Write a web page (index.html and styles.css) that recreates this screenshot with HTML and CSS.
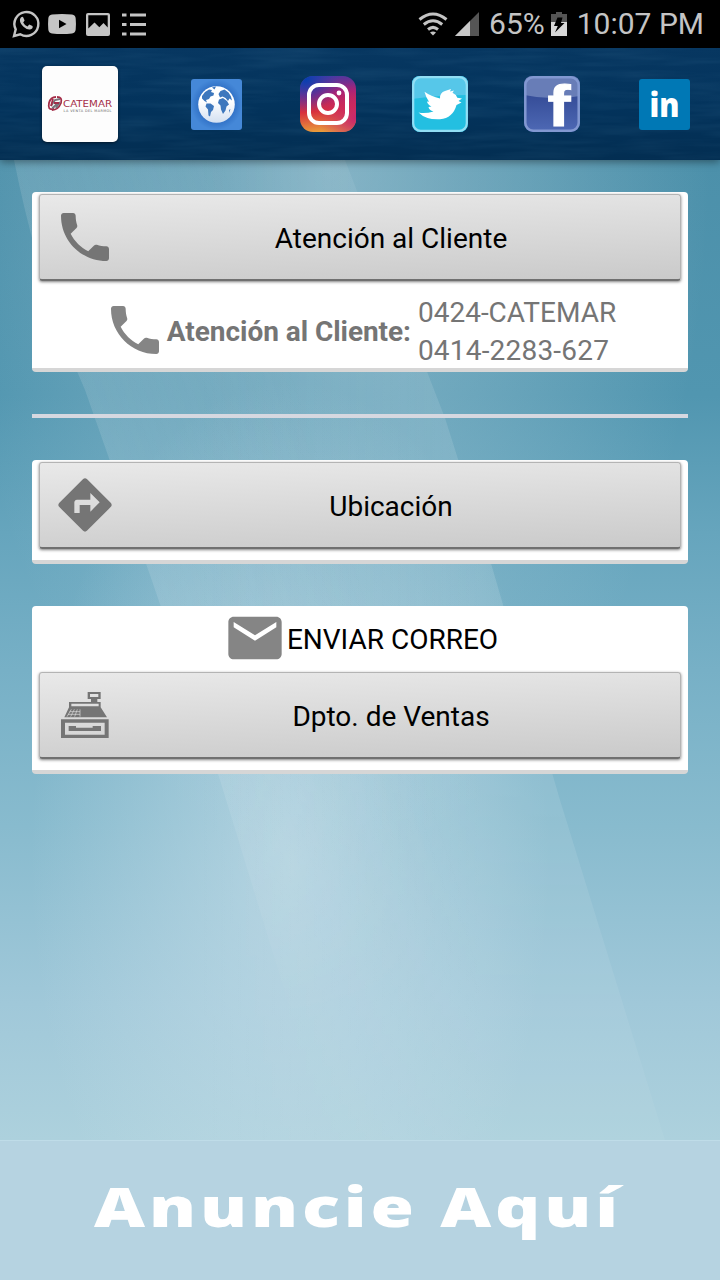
FILE: index.html
```
<!DOCTYPE html>
<html lang="es">
	<head>
		<meta charset="UTF-8"/>
		<meta name="viewport" content="width=720, initial-scale=1"/>
		<title>Catemar</title>
		<link rel="stylesheet" href="styles.css">
	</head>
	<body>
		<div class="status">
			<div class="status-left">
				<svg width="28" height="30" viewBox="0 0 28 30" fill="none" stroke="#c4c4c4">
					<path d="M2 27l1.700-6.600A12 12 0 1 1 8.300 25.300z" stroke-width="2.400"/>
					<path d="M9 8.500q1.500-1.300 2.300 0l1.300 3-1.400 1.900q1.400 2.900 4.300 4l1.700-2 3.300 1.600q.8 2.300-1.700 3.300-3.400 1-7.300-2.600C7.600 14 7.200 10.300 9 8.500z" fill="#c4c4c4" stroke="none"/>
				</svg>
				<svg width="28" height="20" viewBox="0 0 28 20">
					<path d="M4 .6Q14-.5 24 .6q3.500.4 3.700 4 .5 5.400 0 11-.3 3.400-3.700 3.800-10 1-20 0-3.400-.4-3.700-3.800-.5-5.600 0-11Q.5 1 4 .6z" fill="#c4c4c4"/>
					<path d="M11 5.800v8.400l7.500-4.200z" fill="#000"/>
				</svg>
				<svg width="24" height="23" viewBox="0 0 24 23">
					<rect width="24" height="23" rx="2" fill="#c4c4c4"/>
					<path d="M2.300 2.300h19.400v12.200L17.500 10l-4.200 4.200L8.500 9.500l-6.200 6z" fill="#000"/>
				</svg>
				<svg width="24" height="23" viewBox="0 0 24 23" fill="#c4c4c4">
					<path d="M0 .5h4.500v3H0zM8 .5h16v3H8zM0 10h4.500v3H0zM8 10h16v3H8zM0 19.500h4.500v3H0zM8 19.500h16v3H8z"/>
				</svg>
			</div>
			<div class="status-right">
				<svg class="wifi" width="30" height="24" viewBox="0 0 30 24" fill="none" stroke="#c4c4c4" stroke-width="3">
					<path d="M1.500 7.500Q15-3.500 28.500 7.500M5.800 12.500q9.200-7.500 18.400 0M10 17.500q5-4.200 10 0"/>
					<path d="M12 20.500q3-2 6 0l-3 3z" fill="#c4c4c4" stroke="none"/>
				</svg>
				<svg class="signal" width="24" height="24" viewBox="0 0 24 24">
					<path d="M0 24L24 0v24z" fill="#555"/>
					<path d="M0 24l15-15v15z" fill="#c8c8c8"/>
				</svg>
				<span class="percent">65%</span>
				<svg class="battery" width="16" height="24" viewBox="0 0 16 24">
					<path d="M0 2h5V0h6v2h5v8H0z" fill="#555"/>
					<path d="M0 10h16v14H0z" fill="#d8d8d8"/>
					<path d="M6.500 5.500h5L10 11h3.500L4 20.500 6.800 14H3z" fill="#000"/>
				</svg>
				<span class="clock">10:07 PM</span>
			</div>
		</div>

		<header class="header">
			<svg class="texture" width="720" height="112">
				<filter id="wood" x="0" y="0" width="100%" height="100%">
					<feTurbulence type="fractalNoise" baseFrequency="0.012 0.13" numOctaves="3" seed="4"/>
					<feColorMatrix values="0 0 0 0 .12  0 0 0 0 .32  0 0 0 0 .5  1.400 0 0 0 -.5"/>
				</filter>
				<rect width="720" height="112" filter="url(#wood)"/>
			</svg>
			<a class="logo" href="#">
				<svg width="76" height="76" viewBox="0 0 76 76">
					<g fill="none" stroke-width="1.800">
						<path d="M12 43c-5 1-6-1-5-6 1-4 3-6 7-6M10 44c4 0 7-2 9-7 1-4 0-6-4-6" stroke="#a42d48"/>
						<path d="M9 40l4-6 5-1M10 42c3-1 4-3 5-5M14 42l4-6" stroke="#77737a"/>
						<path d="M11 33l-2 7M12 37h5" stroke="#a42d48"/>
					</g>
					<text x="21" y="41" textLength="49" lengthAdjust="spacingAndGlyphs" class="logo-name">CATEMAR</text>
					<text x="21.500" y="46" textLength="48" class="logo-tag">LA VENTA DEL MARMOL</text>
				</svg>
			</a>
			<nav class="social">
				<a href="#" title="Web">
					<svg width="51" height="51" viewBox="0 0 51 51">
						<defs>
							<radialGradient id="web"><stop offset=".65" stop-color="#2f6fc4"/><stop offset="1" stop-color="#4588d8"/></radialGradient>
							<linearGradient id="globe" x2="0" y2="1"><stop offset=".4" stop-color="#fff"/><stop offset="1" stop-color="#d3e0f1"/></linearGradient>
						</defs>
						<rect width="51" height="51" rx="3" fill="url(#web)"/>
						<circle cx="25.500" cy="25.500" r="18.300" fill="url(#globe)"/>
						<g fill="#3d77bd">
							<path d="M11 17l3-4 4-2.500 3 .5-1 2 3 1-.5 2.500-3 1-1.500 2.500-3 1 1 2.500-2.500-1.500-2.500-2.500z"/>
							<path d="M15.500 24.500l4 0 3.500 2.500-1 4-2 2-1 4.500-1.500-1-.5-6-2.500-3z"/>
							<path d="M21 8.500l4-1-1.500 3zM27.500 15l2-3 4-1.500 4 3 2.500 4 1 4-2.500-2-1.500 2.500-2.500-3-3-1.500-2.500 1z"/>
							<path d="M28 20.500l4-1.500 4 3 2 3.500-2.500 2-1 4-2.500 3.500-2-4.500-.5-4-2.500-2.500zM38 31l1.500-1-1.500 4z"/>
						</g>
					</svg>
				</a>
				<a href="#" title="Instagram">
					<svg width="56" height="56" viewBox="0 0 56 56">
						<defs>
							<linearGradient id="insta" x1=".35" y1="0" x2=".45" y2="1">
								<stop offset="0" stop-color="#473aa3"/><stop offset=".32" stop-color="#a32379"/><stop offset=".62" stop-color="#d8303e"/><stop offset="1" stop-color="#eaa13a"/>
							</linearGradient>
							<radialGradient id="insta-blue" cx=".1" cy=".05" r=".6"><stop offset="0" stop-color="#053fb0"/><stop offset="1" stop-color="#3040b0" stop-opacity="0"/></radialGradient>
							<radialGradient id="insta-pink" cx="1" cy=".75" r=".65"><stop offset="0" stop-color="#c8256d"/><stop offset="1" stop-color="#c8256d" stop-opacity="0"/></radialGradient>
						</defs>
						<rect width="56" height="56" rx="13" fill="url(#insta)"/>
						<rect width="56" height="56" rx="13" fill="url(#insta-blue)"/>
						<rect width="56" height="56" rx="13" fill="url(#insta-pink)"/>
						<rect x="9" y="9" width="38" height="38" rx="10" fill="none" stroke="#fff" stroke-width="4"/>
						<circle cx="28" cy="28" r="9" fill="none" stroke="#fff" stroke-width="4"/>
						<circle cx="39" cy="17" r="2.400" fill="#fff"/>
					</svg>
				</a>
				<a href="#" title="Twitter">
					<svg width="56" height="56" viewBox="0 0 56 56">
						<rect width="56" height="56" rx="8" fill="#23bfe1"/>
						<path d="M0 8q0-8 8-8h40q8 0 8 8v11Q28 19 0 23z" fill="#56c7e9"/>
						<rect x="1.200" y="1.200" width="53.600" height="53.600" rx="7.500" fill="none" stroke="#92def4" stroke-width="2.200"/>
						<path d="M6.500 36.500Q13 38 21.500 35.500 17 34 16.500 31l3-.5q-4-2-4.500-5l2 .3q-3-4-4.500-10Q19 20.500 28 22.500q-.3-6 5-7.500l6-2-1 2.500 4-1-1.500 2.300q3.800 1.700 4.800 5l4.700.7-3.500 2.500 3 1.500-5 2.500Q41 42 28 43.300 14 44 6.500 36.500z" fill="#fff"/>
					</svg>
				</a>
				<a href="#" title="Facebook">
					<svg width="56" height="56" viewBox="0 0 56 56">
						<defs><linearGradient id="fb" x2="0" y2="1"><stop offset=".3" stop-color="#344b96"/><stop offset="1" stop-color="#4e69b5"/></linearGradient></defs>
						<rect width="56" height="56" rx="9" fill="url(#fb)"/>
						<path d="M0 9q0-9 9-9h38q9 0 9 9v11Q28 25 0 19z" fill="#687db7"/>
						<rect x="1.300" y="1.300" width="53.400" height="53.400" rx="8" fill="none" stroke="#8298d1" stroke-width="2.500"/>
						<text x="23.500" y="50" textLength="23" lengthAdjust="spacingAndGlyphs" class="fb-letter">f</text>
					</svg>
				</a>
				<a href="#" title="LinkedIn">
					<svg width="51" height="51" viewBox="0 0 51 51">
						<rect width="51" height="51" rx="3" fill="#0078b5"/>
						<text x="10.500" y="37.500" textLength="30" lengthAdjust="spacingAndGlyphs" class="in-letters">in</text>
					</svg>
				</a>
			</nav>
		</header>

		<main class="content">
			<svg class="rays" width="720" height="980" viewBox="0 160 720 980">
				<defs>
					<linearGradient id="ray-left" gradientUnits="userSpaceOnUse" x1="150" y1="575" x2="340" y2="513"><stop offset="0" stop-color="#fff" stop-opacity=".12"/><stop offset="1" stop-color="#fff" stop-opacity="0"/></linearGradient>
					<linearGradient id="ray-right" gradientUnits="userSpaceOnUse" x1="200" y1="0" x2="480" y2="0"><stop offset="0" stop-color="#fff" stop-opacity="0"/><stop offset="1" stop-color="#fff" stop-opacity=".13"/></linearGradient>
					<linearGradient id="fade" x2="0" y2="1"><stop offset=".5" stop-color="#fff"/><stop offset="1" stop-color="#555"/></linearGradient>
					<linearGradient id="fade-out" x2="0" y2="1"><stop offset=".6" stop-color="#fff"/><stop offset=".9" stop-color="#000"/></linearGradient>
					<mask id="fade-mask" maskUnits="userSpaceOnUse" x="0" y="160" width="720" height="980"><rect y="160" width="720" height="980" fill="url(#fade)"/></mask>
					<mask id="fade-out-mask" maskUnits="userSpaceOnUse" x="0" y="160" width="720" height="980"><rect y="160" width="720" height="980" fill="url(#fade-out)"/></mask>
				</defs>
				<path d="M14 160H600V1140H330L220 780 150 575 85 390Q40 290 14 160z" fill="url(#ray-left)" mask="url(#fade-out-mask)"/>
				<path d="M200 160H345L445 418 490 560 560 800 665 1140H200z" fill="url(#ray-right)" mask="url(#fade-mask)"/>
			</svg>

			<section class="card">
				<button type="button" class="btn">
					<svg class="icon" viewBox="0 0 24 24"><path d="M6.620 10.790c1.440 2.830 3.760 5.140 6.590 6.590l2.200-2.200c.27-.27.67-.36 1.020-.24 1.120.37 2.330.57 3.570.57.55 0 1 .45 1 1V20c0 .55-.45 1-1 1-9.390 0-17-7.610-17-17 0-.55.45-1 1-1h3.500c.55 0 1 .45 1 1 0 1.250.2 2.450.57 3.570.11.35.03.74-.25 1.020l-2.200 2.200z"/></svg>
					<span>Atención al Cliente</span>
				</button>
				<div class="row phones">
					<svg class="icon" viewBox="0 0 24 24"><path d="M6.620 10.790c1.440 2.830 3.760 5.140 6.590 6.590l2.200-2.200c.27-.27.67-.36 1.020-.24 1.120.37 2.330.57 3.570.57.55 0 1 .45 1 1V20c0 .55-.45 1-1 1-9.390 0-17-7.610-17-17 0-.55.45-1 1-1h3.500c.55 0 1 .45 1 1 0 1.250.2 2.450.57 3.570.11.35.03.74-.25 1.020l-2.200 2.200z"/></svg>
					<strong>Atención al Cliente:</strong>
					<div class="numbers">
						<div>0424-CATEMAR</div>
						<div class="number">0414-2283-627</div>
					</div>
				</div>
			</section>

			<hr class="divider"/>

			<section class="card card-padded">
				<button type="button" class="btn">
					<svg class="icon" viewBox="0 0 24 24"><path d="M21.710 11.290l-9-9c-.39-.39-1.020-.39-1.410 0l-9 9c-.39.39-.39 1.020 0 1.410l9 9c.39.39 1.020.39 1.410 0l9-9c.39-.38.39-1.010 0-1.410zM14 14.500V12h-4v3H8v-4c0-.55.45-1 1-1h5V7.500l3.500 3.500-3.500 3.500z"/></svg>
					<span>Ubicación</span>
				</button>
			</section>

			<section class="card card-padded card-mail">
				<div class="row mail">
					<svg class="icon" viewBox="0 0 24 24"><path d="M20 4H4c-1.100 0-1.990.9-1.990 2L2 18c0 1.100.9 2 2 2h16c1.100 0 2-.9 2-2V6c0-1.100-.9-2-2-2zm0 4l-8 5-8-5V6l8 5 8-5v2z"/></svg>
					<span>ENVIAR CORREO</span>
				</div>
				<button type="button" class="btn">
					<svg class="icon icon-register" viewBox="-24 -27 192 192">
						<path d="M80 0h39v21h-10v9h10v16l19 30H10l14-30V30h66v-9H80zM87 6v9h25V6zM31 35v8h82v-8z" fill-rule="evenodd"/>
						<path d="M31 52l-13 22M40 52l-11 22M49 52l-8 22M57 52v22M26 59h31M21 67h36" stroke="#dcdcdc" stroke-width="2" fill="none"/>
						<path d="M0 82h143v56H0zM12 92v36h119V92zM23 102h22v5h50v-5h25v15H23z" fill-rule="evenodd"/>
					</svg>
					<span>Dpto. de Ventas</span>
				</button>
			</section>
		</main>

		<footer class="ad">
			<svg width="720" height="139" viewBox="0 1141 720 139">
				<text x="94" y="1227" textLength="528" lengthAdjust="spacingAndGlyphs" class="ad-text">Anuncie Aquí</text>
			</svg>
		</footer>
	</body>
</html>
```
FILE: styles.css
```
html, body {
	margin: 0;
	padding: 0;
	font-family: Roboto, sans-serif;
	font-size: 28px;
	color: #000;
}

body {
	display: flex;
	flex-direction: column;
	width: 720px;
	height: 1280px;
	overflow: hidden;
}

svg {
	display: block;
	flex: none;
	overflow: visible;
}

.status {
	display: flex;
	justify-content: space-between;
	align-items: center;
	height: 48px;
	padding: 0 16px 0 12px;
	box-sizing: border-box;
	background: #000;
	color: #c4c4c4;
	font-size: 30px;
	line-height: 50px;
	white-space: nowrap;
}

.status-left,
.status-right {
	display: flex;
	align-items: center;
}

.status-left svg {
	margin-right: 10px;
}

.status-left svg:first-child {
	margin-right: 8px;
}

.status-left svg:nth-child(3) {
	margin-right: 12px;
}

.signal {
	margin: 0 10px 0 7px;
}

.battery {
	margin: 0 10px 0 6px;
}

.header {
	position: relative;
	z-index: 1;
	display: flex;
	align-items: center;
	height: 112px;
	background: linear-gradient(#073761, #03335c 50%, #032e52);
	box-shadow: 0 2px 8px rgba(0,0,0,0.4);
}

.texture {
	position: absolute;
	left: 0;
	top: 0;
	z-index: -1;
	opacity: 0.14;
}

.logo {
	margin: 0 42px;
	border-radius: 5px;
	background: #fdfdfd;
	box-shadow: 0 1px 3px rgba(0,0,0,0.5);
}

.logo-name {
	font: 8.6px "DejaVu Sans", sans-serif;
	fill: #a42d48;
}

.logo-tag {
	font: 3.4px "DejaVu Sans", sans-serif;
	fill: #666;
}

.social {
	display: flex;
	flex: 1;
}

.social a {
	display: flex;
	flex: 1;
	justify-content: center;
	align-items: center;
}

.fb-letter {
	font: bold 57px "Liberation Sans", sans-serif;
	fill: #fff;
	stroke: #fff;
	stroke-width: 1px;
}

.in-letters {
	font: 800 33px "Open Sans", sans-serif;
	fill: #fff;
}

.content {
	position: relative;
	flex: 1;
	padding: 32px;
	background:
		radial-gradient(ellipse 260px 480px at 290px 700px, rgba(205,226,236,0.6), rgba(205,226,236,0)),
		radial-gradient(ellipse 380px 700px at 330px 0, rgba(190,215,225,0.5), rgba(190,215,225,0)),
		linear-gradient(#4c90aa, #5196b0 24%, #66a5bd 38%, #77b0c6 52%, #88bbce 68%, #a0c8d9 86%, #add1dd);
}

.rays {
	position: absolute;
	left: 0;
	top: 0;
}

.card {
	position: relative;
	padding: 2px 7px 0;
	border-bottom: 4px solid #d6d6d6;
	border-radius: 4px;
	background: #fff;
}

.card-padded {
	padding-bottom: 11px;
}

.card-mail {
	margin-top: 42px;
	padding-top: 0;
}

.btn {
	display: flex;
	align-items: center;
	width: 100%;
	height: 87px;
	margin: 0;
	padding: 0 14px 0 13px;
	box-sizing: border-box;
	border: 1px solid #b4b4b4;
	border-bottom: 2px solid #707070;
	border-radius: 3px;
	background: linear-gradient(178deg, #e9e9e9, #cacaca);
	box-shadow: 0 1px 3px rgba(0,0,0,0.5);
	font: inherit;
	color: #000;
}

.btn span {
	flex: 1;
	padding: 2px 1px 0 0;
	text-align: center;
}

.icon {
	width: 64px;
	height: 64px;
	fill: #757575;
}

.row {
	display: flex;
	justify-content: center;
	align-items: center;
}

.row .icon {
	fill: #858585;
}

.phones {
	height: 87px;
	padding: 11px 1px 0 0;
	box-sizing: border-box;
	color: #757575;
}

.phones strong {
	padding-top: 2px;
	letter-spacing: -0.05px;
}

.numbers {
	margin-left: 7px;
	padding-top: 3px;
	line-height: 38px;
}

.number {
	letter-spacing: 0.2px;
}

.mail {
	height: 66px;
}

.mail .icon {
	margin: -2px 0 0 1px;
}

.divider {
	position: relative;
	width: 100%;
	height: 4px;
	margin: 42px 0;
	border: none;
	background: #d6d8e0;
}

.ad {
	height: 139px;
	border-top: 1px solid #bfdce8;
	background: #b6d3e1;
}

.ad-text {
	font: 800 54px "Open Sans", sans-serif;
	letter-spacing: 3px;
	fill: #fff;
}
```
